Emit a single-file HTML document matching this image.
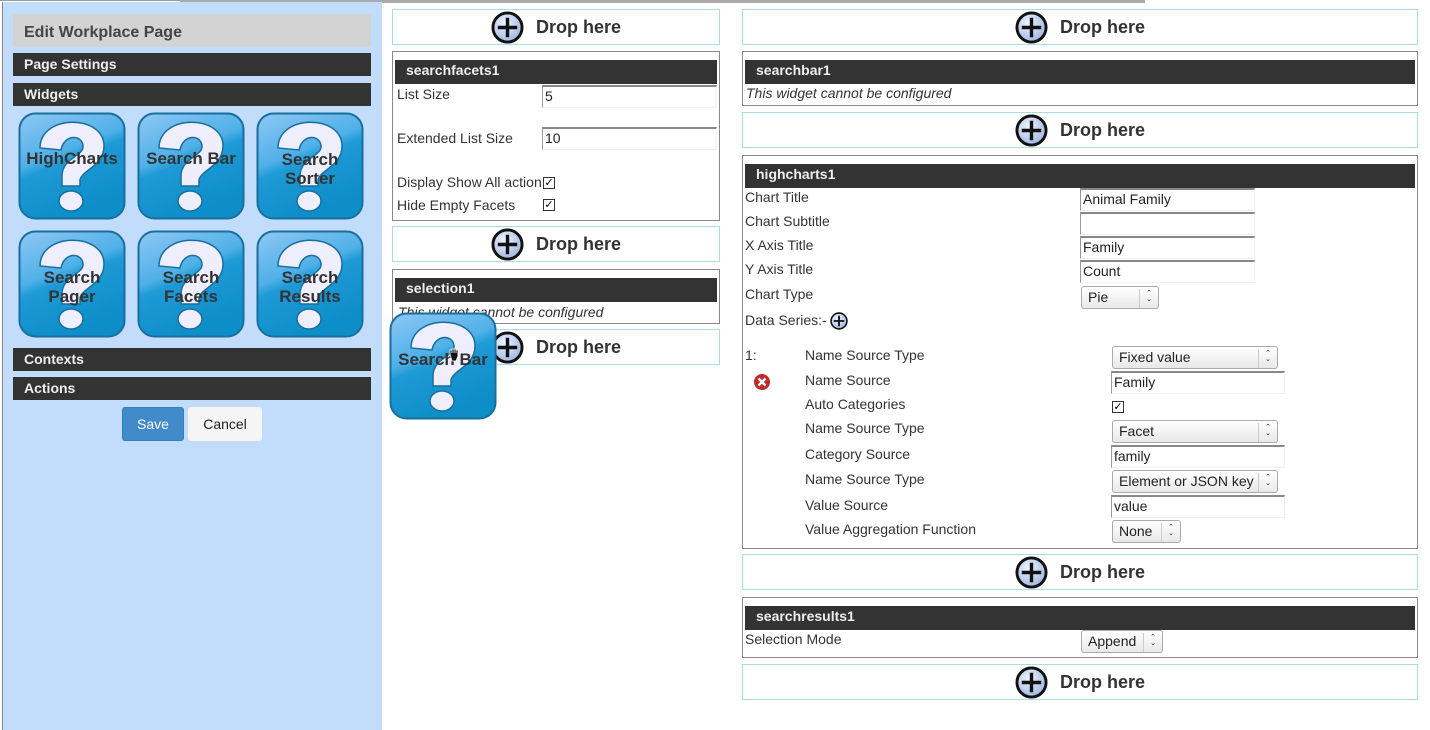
<!DOCTYPE html>
<html><head><meta charset="utf-8"><style>
*{box-sizing:border-box}
body{margin:0;width:1430px;height:730px;overflow:hidden;background:#fff;font-family:"Liberation Sans",sans-serif;position:relative}
.a{position:absolute}
.left{left:2px;top:2px;width:380px;height:728px;background:#c2dcfc;border-left:1px solid #888}
.bar{position:absolute;left:13px;width:358px;background:#333;color:#eee;font-weight:bold;font-size:14px;padding-left:11px;line-height:23px;height:23px}
.tile{position:absolute;width:108px;height:108px}
.tile .t{position:absolute;left:0;right:0;top:0;bottom:0;display:flex;align-items:center;justify-content:center;text-align:center;font-weight:bold;font-size:17px;color:#333;line-height:19px}
.drop{position:absolute;border:1px solid #a8dce6;background:#fff;height:36px;display:flex;align-items:center;justify-content:center;font-weight:bold;font-size:18px;color:#333}
.drop svg{margin-right:12px}
.box{position:absolute;border:1px solid #888;background:#fff}
.hd{position:absolute;left:2px;right:2px;top:8px;height:24px;background:#333;color:#eee;font-weight:bold;font-size:14px;line-height:20px;padding-left:11px}
.lbl{position:absolute;font-size:14px;color:#333}
.inp{position:absolute;border-top:2px solid #888;border-left:1px solid #999;background:#fff;font-size:14px;color:#222;padding-left:2px;line-height:19px;height:23px;border-bottom:1px solid #f0f0f0;border-right:1px solid #f0f0f0}
.sel{position:absolute;border:1px solid #aaa;border-radius:3px;background:linear-gradient(#fff,#e8e8e8);font-size:14px;color:#222;height:23px;line-height:21px;padding-left:6px}
.sel:after{content:"\2303\A\2304";position:absolute;right:0;top:2px;width:18px;height:17px;border-left:1px solid #ccc;font-size:7px;line-height:6px;text-align:center;white-space:pre;padding-top:2px}
.cb{position:absolute;width:12px;height:12px;border:1px solid #333;background:#fff;font-size:11px;line-height:10px;text-align:center;color:#000}
.it{font-style:italic;font-size:14px;color:#333;position:absolute}
</style></head><body>
<div class="a" style="left:0;top:0;width:180px;height:1px;background:#999"></div>
<div class="a" style="left:180px;top:0;width:965px;height:3px;background:#aaa"></div>
<div class="a left"></div>
<div class="a" style="left:13px;top:14px;width:358px;height:33px;background:#d3d3d3;color:#444;font-weight:bold;font-size:16px;line-height:37px;padding-left:11px">Edit Workplace Page</div>
<div class="bar" style="top:53px">Page Settings</div>
<div class="bar" style="top:83px">Widgets</div>
<div class="bar" style="top:348px">Contexts</div>
<div class="bar" style="top:377px">Actions</div>
<div class="a" style="left:122px;top:407px;width:62px;height:34px;background:#428bca;border:1px solid #357ebd;border-radius:3px;color:#fff;font-size:14px;text-align:center;line-height:32px">Save</div>
<div class="a" style="left:188px;top:407px;width:74px;height:34px;background:#f5f5f5;border-radius:3px;color:#222;font-size:14px;text-align:center;line-height:34px">Cancel</div>

<svg width="0" height="0" style="position:absolute"><defs>
<linearGradient id="g" x1="0" y1="0" x2="0.4" y2="1"><stop offset="0" stop-color="#8fc8f4"/><stop offset="0.45" stop-color="#4fb0e8"/><stop offset="0.55" stop-color="#1e9ad6"/><stop offset="1" stop-color="#0d8ec9"/></linearGradient>
<symbol id="q" viewBox="0 0 108 108"><rect x="1.5" y="1.5" width="105" height="105" rx="16" fill="url(#g)" stroke="#1a6e9c" stroke-width="2"/>
<path d="M22 36 C22 2 86 2 86 34 C86 54 64 58 62 68 L62 74 L44 74 L44 64 C44 46 66 44 65 34 C64 22 46 22 43 38 Z" fill="#eeeefc" stroke="#1a6e9c" stroke-width="1.5"/>
<ellipse cx="53" cy="89" rx="12" ry="10" fill="#eeeefc" stroke="#1a6e9c" stroke-width="1.5"/></symbol>
<symbol id="p" viewBox="0 0 34 34"><defs><radialGradient id="rg" cx="0.4" cy="0.35" r="0.7"><stop offset="0" stop-color="#eef4ff"/><stop offset="1" stop-color="#9cb4e0"/></radialGradient></defs><circle cx="17" cy="17" r="15" fill="url(#rg)" stroke="#111" stroke-width="3"/><path d="M17 7V27M7 17H27" stroke="#111" stroke-width="3.5"/></symbol>
</defs></svg>

<div class="tile" style="left:18px;top:112px"><svg width="108" height="108"><use href="#q"/></svg><div class="t" style="padding-bottom:16px">HighCharts</div></div>
<div class="tile" style="left:137px;top:112px"><svg width="108" height="108"><use href="#q"/></svg><div class="t" style="padding-bottom:16px">Search Bar</div></div>
<div class="tile" style="left:256px;top:112px"><svg width="108" height="108"><use href="#q"/></svg><div class="t" style="padding-top:6px">Search<br>Sorter</div></div>
<div class="tile" style="left:18px;top:230px"><svg width="108" height="108"><use href="#q"/></svg><div class="t" style="padding-top:6px">Search<br>Pager</div></div>
<div class="tile" style="left:137px;top:230px"><svg width="108" height="108"><use href="#q"/></svg><div class="t" style="padding-top:6px">Search<br>Facets</div></div>
<div class="tile" style="left:256px;top:230px"><svg width="108" height="108"><use href="#q"/></svg><div class="t" style="padding-top:6px">Search<br>Results</div></div>

<!-- middle -->
<div class="drop" style="left:392px;top:9px;width:328px"><svg width="33" height="33"><use href="#p"/></svg>Drop here</div>
<div class="box" style="left:392px;top:51px;width:328px;height:170px">
<div class="hd">searchfacets1</div>
<div class="lbl" style="left:4px;top:34px">List Size</div>
<div class="inp" style="left:149px;top:33px;width:175px">5</div>
<div class="lbl" style="left:4px;top:78px">Extended List Size</div>
<div class="inp" style="left:149px;top:75px;width:175px">10</div>
<div class="lbl" style="left:4px;top:122px">Display Show All action</div>
<div class="cb" style="left:150px;top:125px">✓</div>
<div class="lbl" style="left:4px;top:145px">Hide Empty Facets</div>
<div class="cb" style="left:150px;top:147px">✓</div>
</div>
<div class="drop" style="left:392px;top:226px;width:328px"><svg width="33" height="33"><use href="#p"/></svg>Drop here</div>
<div class="box" style="left:392px;top:269px;width:328px;height:55px">
<div class="hd">selection1</div>
<div class="it" style="left:5px;top:34px">This widget cannot be configured</div>
</div>
<div class="drop" style="left:392px;top:329px;width:328px"><svg width="33" height="33"><use href="#p"/></svg>Drop here</div>

<!-- right -->
<div class="drop" style="left:742px;top:9px;width:676px"><svg width="33" height="33"><use href="#p"/></svg>Drop here</div>
<div class="box" style="left:742px;top:51px;width:676px;height:55px">
<div class="hd">searchbar1</div>
<div class="it" style="left:3px;top:33px">This widget cannot be configured</div>
</div>
<div class="drop" style="left:742px;top:112px;width:676px"><svg width="33" height="33"><use href="#p"/></svg>Drop here</div>
<div class="box" style="left:742px;top:155px;width:676px;height:394px">
<div class="hd">highcharts1</div>
<div class="lbl" style="left:2px;top:33px">Chart Title</div>
<div class="inp" style="left:337px;top:32px;width:175px">Animal Family</div>
<div class="lbl" style="left:2px;top:57px">Chart Subtitle</div>
<div class="inp" style="left:337px;top:56px;width:175px"></div>
<div class="lbl" style="left:2px;top:81px">X Axis Title</div>
<div class="inp" style="left:337px;top:80px;width:175px">Family</div>
<div class="lbl" style="left:2px;top:105px">Y Axis Title</div>
<div class="inp" style="left:337px;top:104px;width:175px">Count</div>
<div class="lbl" style="left:2px;top:130px">Chart Type</div>
<div class="sel" style="left:338px;top:130px;width:78px">Pie</div>
<div class="lbl" style="left:2px;top:156px">Data Series:-</div>
<svg class="a" style="left:87px;top:156px" width="18" height="18"><use href="#p"/></svg>
<div class="lbl" style="left:2px;top:191px">1:</div>
<svg class="a" style="left:10px;top:217px" width="18" height="18"><circle cx="9" cy="9" r="8" fill="#c0282a"/><path d="M5.5 5.5L12.5 12.5M12.5 5.5L5.5 12.5" stroke="#fff" stroke-width="2.5"/></svg>
<div class="lbl" style="left:62px;top:191px">Name Source Type</div>
<div class="sel" style="left:369px;top:190px;width:166px">Fixed value</div>
<div class="lbl" style="left:62px;top:216px">Name Source</div>
<div class="inp" style="left:368px;top:215px;width:174px">Family</div>
<div class="lbl" style="left:62px;top:240px">Auto Categories</div>
<div class="cb" style="left:369px;top:245px">✓</div>
<div class="lbl" style="left:62px;top:264px">Name Source Type</div>
<div class="sel" style="left:369px;top:264px;width:166px">Facet</div>
<div class="lbl" style="left:62px;top:290px">Category Source</div>
<div class="inp" style="left:368px;top:289px;width:174px">family</div>
<div class="lbl" style="left:62px;top:315px">Name Source Type</div>
<div class="sel" style="left:369px;top:314px;width:166px">Element or JSON key</div>
<div class="lbl" style="left:62px;top:341px">Value Source</div>
<div class="inp" style="left:368px;top:339px;width:174px">value</div>
<div class="lbl" style="left:62px;top:365px">Value Aggregation Function</div>
<div class="sel" style="left:369px;top:364px;width:69px">None</div>
</div>
<div class="drop" style="left:742px;top:554px;width:676px"><svg width="33" height="33"><use href="#p"/></svg>Drop here</div>
<div class="box" style="left:742px;top:597px;width:676px;height:61px">
<div class="hd">searchresults1</div>
<div class="lbl" style="left:2px;top:33px">Selection Mode</div>
<div class="sel" style="left:338px;top:32px;width:82px">Append</div>
</div>
<div class="drop" style="left:742px;top:664px;width:676px"><svg width="33" height="33"><use href="#p"/></svg>Drop here</div>

<div class="tile" style="left:389px;top:312px"><svg width="108" height="108"><use href="#q"/></svg><div class="t" style="padding-bottom:14px">Search Bar</div></div>
<svg class="a" style="left:447px;top:347px" width="16" height="16"><path d="M3 7V3h2v3V2h2v4V2h2v4V3h2v6l-2 5H5z" fill="#111" stroke="#fff" stroke-width=".8"/></svg>
</body></html>
